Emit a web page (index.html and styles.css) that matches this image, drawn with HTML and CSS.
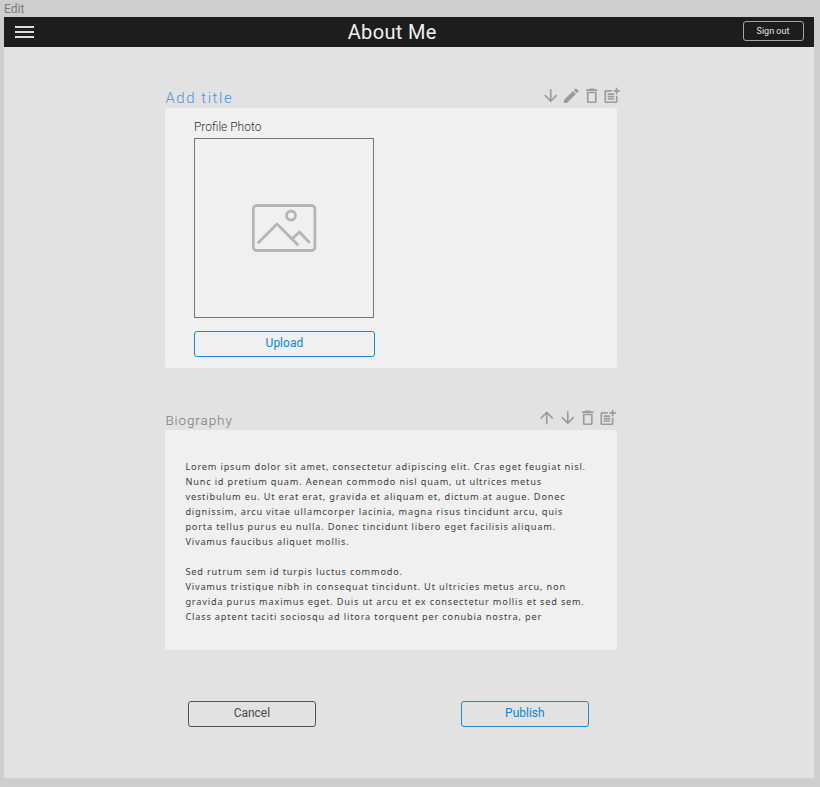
FILE: index.html
```html
<!DOCTYPE html>
<html lang="en">
<head>
<meta charset="utf-8">
<title>About Me</title>
<link rel="stylesheet" href="styles.css">
</head>
<body>
<svg width="0" height="0" class="defs" aria-hidden="true">
<symbol id="down" viewBox="0 0 24 24"><path d="M20 12l-1.41-1.41L13 16.17V4h-2v12.17l-5.58-5.59L4 12l8 8 8-8z"/></symbol>
<symbol id="up" viewBox="0 0 24 24"><path d="M4 12l1.41 1.41L11 7.83V20h2V7.83l5.58 5.59L20 12l-8-8-8 8z"/></symbol>
<symbol id="edit" viewBox="0 0 24 24"><path d="M3 17.25V21h3.75L17.81 9.94l-3.75-3.75L3 17.25zM20.71 7.04a1 1 0 0 0 0-1.41l-2.34-2.34a1 1 0 0 0-1.41 0l-1.83 1.83 3.75 3.75 1.83-1.83z"/></symbol>
<symbol id="trash" viewBox="0 0 24 24"><path d="M6 19c0 1.1.9 2 2 2h8c1.1 0 2-.9 2-2V7H6v12zM8 9h8v10H8V9zm7.500-5l-1-1h-5l-1 1H5v2h14V4z"/></symbol>
<symbol id="post" viewBox="0 0 24 24"><path d="M17 19.220H5V7h7V5H5c-1.100 0-2 .9-2 2v12c0 1.100.9 2 2 2h12c1.100 0 2-.9 2-2v-7h-2zM19 2h-2v3h-3v2h3v3h2V7h3V5h-3zM7 9h8v2H7zM7 12h8v2H7zM7 15h8v2H7z"/></symbol>
</svg>
<div class="label">Edit</div>
<div class="frame">
  <header class="bar">
    <div class="menu"><i></i><i></i><i></i></div>
    <h1>About Me</h1>
    <button class="signout">Sign out</button>
  </header>
  <main>
    <section class="photo">
      <div class="head">
        <h2 class="add">Add title</h2>
        <div class="tools"><svg><use href="#down"/></svg><svg><use href="#edit"/></svg><svg><use href="#trash"/></svg><svg><use href="#post"/></svg></div>
      </div>
      <div class="card">
        <div class="caption">Profile Photo</div>
        <div class="picture">
          <svg width="66" height="50" viewBox="0 0 66 50"><rect x="2.300" y="2.500" width="61.600" height="45" rx="3.500"/><circle cx="40" cy="12.500" r="4.500"/><path d="M7.500 39.500L26 21L46.500 41.500M41 36L48.500 29L58 39"/></svg>
        </div>
        <button class="btn blue upload">Upload</button>
      </div>
    </section>
    <section class="bio">
      <div class="head">
        <h2>Biography</h2>
        <div class="tools"><svg><use href="#up"/></svg><svg><use href="#down"/></svg><svg><use href="#trash"/></svg><svg><use href="#post"/></svg></div>
      </div>
      <div class="card text">
        <p>Lorem ipsum dolor sit amet, consectetur adipiscing elit. Cras eget feugiat nisl.<br>Nunc id pretium quam. Aenean commodo nisl quam, ut ultrices metus<br>vestibulum eu. Ut erat erat, gravida et aliquam et, dictum at augue. Donec<br>dignissim, arcu vitae ullamcorper lacinia, magna risus tincidunt arcu, quis<br>porta tellus purus eu nulla. Donec tincidunt libero eget facilisis aliquam.<br>Vivamus faucibus aliquet mollis.</p>
        <p>Sed rutrum sem id turpis luctus commodo.<br>Vivamus tristique nibh in consequat tincidunt. Ut ultricies metus arcu, non<br>gravida purus maximus eget. Duis ut arcu et ex consectetur mollis et sed sem.<br>Class aptent taciti sociosqu ad litora torquent per conubia nostra, per</p>
      </div>
    </section>
    <div class="actions"><button class="btn">Cancel</button><button class="btn blue">Publish</button></div>
  </main>
</div>
</body>
</html>
```
FILE: styles.css
```css
* { box-sizing: border-box; }
body { margin: 0; height: 787px; overflow: hidden; background: #cecece; font-family: Roboto, sans-serif; color: #444; }
h1, h2, p { margin: 0; font-weight: 300; }
.defs { position: absolute; }
.label { height: 17px; padding: 2px 0 0 4px; font: 12px/15px Roboto, sans-serif; color: #7c7c7c; }
.frame { width: 809.5px; height: 761px; margin-left: 4px; background: #e2e2e2; }
.bar { height: 29.5px; display: grid; grid-template-columns: 1fr auto 1fr; align-items: center; padding: 0 10px 0 11px; background: #1d1d1d; }
.menu { display: flex; flex-direction: column; gap: 3px; width: 19px; }
.menu i { height: 2px; background: #dedede; }
h1 { font-size: 20px; line-height: 29px; font-weight: 400; letter-spacing: .35px; color: #f1f1f1; transform: translate(-17px, 1px); }
.signout { justify-self: end; width: 61px; height: 20px; padding: 0; border: 1px solid #a5a5a5; border-radius: 3px; background: none; color: #e4e4e4; font: 9px/15px Roboto, sans-serif; margin-bottom: 1px; }
main { width: 452px; margin-left: 161.400px; padding-top: 38.500px; }
.head { display: flex; justify-content: space-between; height: 23px; }
h2 { font-size: 13.5px; line-height: 18px; letter-spacing: .9px; color: #777; margin-top: 4px; }
.add { font-size: 15px; letter-spacing: 1.550px; color: #4b8fe9; }
.tools { display: flex; gap: .9px; height: 20px; }
.tools svg { width: 19.500px; height: 19.500px; fill: #9b9b9b; }
.photo .tools { margin: 1px -4.200px 0 0; }
.photo .tools svg:nth-child(2) { transform: translateX(.5px); }
.bio .tools { margin: 1px -.5px 0 0; }
.card { background: #f0f0f0; border-radius: 3px; }
.photo .card { height: 260px; padding: 11px 28.500px; }
.caption { font-size: 12px; line-height: 17px; font-weight: 300; color: #333; }
.picture { width: 180px; height: 180px; margin-top: 2px; border: 1px solid #777; display: flex; align-items: center; justify-content: center; }
.picture svg { fill: none; stroke: #b5b5b5; stroke-width: 2.800; stroke-linecap: round; stroke-linejoin: round; }
.btn { width: 128px; height: 26px; padding: 0 0 1px; border: 1px solid #555; border-radius: 3px; background: none; color: #4a4a4a; font: 12px/23px Roboto, sans-serif; }
.blue { border-color: #1c8acb; color: #1385cb; }
.upload { display: block; width: 181px; margin-top: 12.500px; }
.bio { margin-top: 39.400px; }
.text { height: 220px; padding: 29px 20px 0; }
.text p { font-family: "Noto Sans", sans-serif; font-size: 9.200px; line-height: 15px; font-weight: 400; letter-spacing: .82px; white-space: nowrap; color: #3c3c3c; }
.text p + p { margin-top: 15px; }
.actions { display: flex; justify-content: space-between; padding: 50.600px 28.500px 0 22.500px; }
```
